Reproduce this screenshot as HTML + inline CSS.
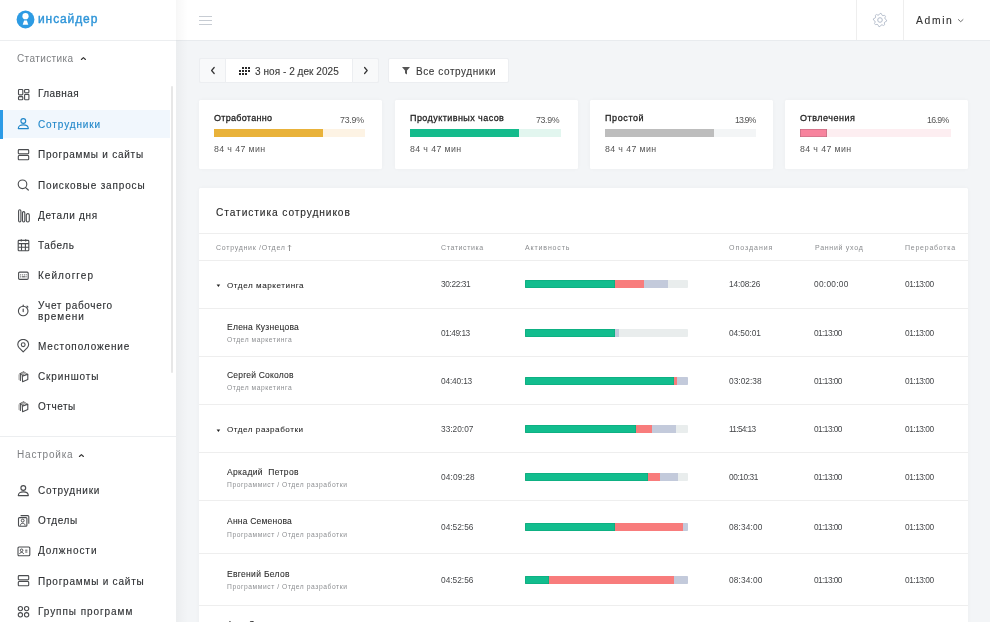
<!DOCTYPE html>
<html><head><meta charset="utf-8"><style>
html,body{margin:0;padding:0;width:990px;height:622px;overflow:hidden;background:#f3f5f7}
body{position:relative;font-family:"Liberation Sans", sans-serif}
.t{position:absolute;white-space:nowrap;will-change:transform}
#ct0,#ct1,#ct2,#ct3{-webkit-text-stroke:0.28px #222}
.med{-webkit-text-stroke:0.12px currentColor}
.med2{-webkit-text-stroke:0.08px currentColor}
.logo{-webkit-text-stroke:0.4px currentColor}
.r{position:absolute;display:block}
</style></head><body>
<div class="r" style="left:0px;top:0px;width:990px;height:622px;background:#f3f5f7"></div>
<div class="r" style="left:176px;top:0px;width:814px;height:40px;background:#fff"></div>
<div class="r" style="left:176px;top:40px;width:814px;height:1px;background:#e8ebee"></div>
<div class="r" style="left:0px;top:0px;width:176px;height:622px;background:#fff"></div>
<div class="r" style="left:0px;top:40px;width:176px;height:1px;background:#eceef0"></div>
<div class="r" style="left:176px;top:0px;width:12px;height:622px;background:linear-gradient(to right, rgba(0,0,0,0.03), rgba(0,0,0,0))"></div>
<div class="r" style="left:170.5px;top:86px;width:2.5px;height:287px;background:#e7e7e7;border-radius:1px"></div>
<svg class="r" style="left:16.2px;top:10.3px;" width="19" height="19" viewBox="0 0 19 19" fill="none"><circle cx="9.5" cy="9.5" r="8.9" fill="#2d9be3"/><circle cx="9.5" cy="6.2" r="3.1" fill="#fff"/><path d="M8.1 10.4 L10.9 10.4 L12.3 14.8 L6.7 14.8 Z" fill="#fff"/></svg>
<div class="t logo" id="logo" style="left:37.80px;top:13.04px;font-size:12px;line-height:12px;color:#2f95d8;font-weight:400;letter-spacing:0.900px">инсайдер</div>
<div class="t" id="sec1" style="left:16.70px;top:53.53px;font-size:10px;line-height:10px;color:#7d7f82;font-weight:400;letter-spacing:0.390px">Статистика</div>
<svg class="r" style="left:80px;top:56px;" width="7" height="5" viewBox="0 0 7 5" fill="none"><path d="M1.4 3.5 L3.4 1.6 L5.4 3.5" stroke="#333" stroke-width="1.15" stroke-linecap="round" stroke-linejoin="round"/></svg>
<div class="r" style="left:0px;top:110px;width:170px;height:28px;background:#f1f7fd"></div>
<div class="r" style="left:0px;top:110px;width:3px;height:28.5px;background:#2d9be6"></div>
<div class="t med" id="n1" style="left:38.30px;top:89.33px;font-size:10px;line-height:10px;color:#2e3033;font-weight:400;letter-spacing:0.435px">Главная</div>
<div class="t med" id="n2" style="left:38.30px;top:119.53px;font-size:10px;line-height:10px;color:#1f86c9;font-weight:400;letter-spacing:0.890px">Сотрудники</div>
<div class="t med" id="n3" style="left:38.30px;top:150.34px;font-size:10px;line-height:10px;color:#2e3033;font-weight:400;letter-spacing:0.754px">Программы и сайты</div>
<div class="t med" id="n4" style="left:38.30px;top:180.94px;font-size:10px;line-height:10px;color:#2e3033;font-weight:400;letter-spacing:0.844px">Поисковые запросы</div>
<div class="t med" id="n5" style="left:38.30px;top:211.03px;font-size:10px;line-height:10px;color:#2e3033;font-weight:400;letter-spacing:0.680px">Детали дня</div>
<div class="t med" id="n6" style="left:38.30px;top:241.13px;font-size:10px;line-height:10px;color:#2e3033;font-weight:400;letter-spacing:0.576px">Табель</div>
<div class="t med" id="n7" style="left:38.30px;top:270.84px;font-size:10px;line-height:10px;color:#2e3033;font-weight:400;letter-spacing:1.035px">Кейлоггер</div>
<div class="t med" id="n8" style="left:38.30px;top:300.84px;font-size:10px;line-height:10px;color:#2e3033;font-weight:400;letter-spacing:0.667px">Учет рабочего</div>
<div class="t med" id="n8b" style="left:38.30px;top:311.64px;font-size:10px;line-height:10px;color:#2e3033;font-weight:400;letter-spacing:0.960px">времени</div>
<div class="t med" id="n9" style="left:38.30px;top:341.74px;font-size:10px;line-height:10px;color:#2e3033;font-weight:400;letter-spacing:0.865px">Местоположение</div>
<div class="t med" id="n10" style="left:38.30px;top:371.94px;font-size:10px;line-height:10px;color:#2e3033;font-weight:400;letter-spacing:0.878px">Скриншоты</div>
<div class="t med" id="n11" style="left:38.30px;top:402.04px;font-size:10px;line-height:10px;color:#2e3033;font-weight:400;letter-spacing:0.522px">Отчеты</div>
<svg class="r" style="left:17px;top:89px;" width="13" height="12" viewBox="0 0 13 12" fill="none"><rect x="1.5" y="0.5" width="4.3" height="5.4" rx="0.8" stroke="#4a4c4f" stroke-width="1.1"/><rect x="1.5" y="7.6" width="4.3" height="3.2" rx="0.8" stroke="#4a4c4f" stroke-width="1.1"/><rect x="7.6" y="0.5" width="4.3" height="3.2" rx="0.8" stroke="#4a4c4f" stroke-width="1.1"/><rect x="7.6" y="5.4" width="4.3" height="5.4" rx="0.8" stroke="#4a4c4f" stroke-width="1.1"/></svg>
<svg class="r" style="left:17px;top:118.3px;" width="13" height="12" viewBox="0 0 13 12" fill="none"><circle cx="6.3" cy="3" r="2.4" stroke="#1f86c9" stroke-width="1.15"/><path d="M1.3 10.6 C1.3 7.6 3.6 6.9 6.3 6.9 C9 6.9 11.3 7.6 11.3 10.6 Z" stroke="#1f86c9" stroke-width="1.15" stroke-linejoin="round"/></svg>
<svg class="r" style="left:17px;top:148.6px;" width="13" height="12" viewBox="0 0 13 12" fill="none"><rect x="1.3" y="0.6" width="10.4" height="4.3" rx="0.9" stroke="#4a4c4f" stroke-width="1.1"/><rect x="1.3" y="6.5" width="10.4" height="4.3" rx="0.9" stroke="#4a4c4f" stroke-width="1.1"/></svg>
<svg class="r" style="left:17px;top:179px;" width="13" height="12" viewBox="0 0 13 12" fill="none"><circle cx="5.5" cy="5.3" r="4.3" stroke="#4a4c4f" stroke-width="1.1"/><path d="M8.6 8.6 L11.3 11" stroke="#4a4c4f" stroke-width="1.2" stroke-linecap="round"/></svg>
<svg class="r" style="left:17px;top:209.2px;" width="14" height="14" viewBox="0 0 14 14" fill="none"><rect x="1.6" y="0.8" width="2.3" height="12.2" rx="1.15" stroke="#4a4c4f" stroke-width="1.1"/><rect x="5.5" y="2.6" width="2.3" height="10.4" rx="1.15" stroke="#4a4c4f" stroke-width="1.1"/><rect x="9.3" y="4.6" width="3" height="8.4" rx="1.5" stroke="#4a4c4f" stroke-width="1.1"/></svg>
<svg class="r" style="left:17px;top:239.2px;" width="13" height="13" viewBox="0 0 13 13" fill="none"><rect x="1.2" y="1.4" width="10.6" height="10.4" rx="0.8" stroke="#4a4c4f" stroke-width="1.1"/><path d="M1.2 4.6 H11.8 M1.2 8.3 H11.8 M4.5 4.6 V11.8 M8.4 4.6 V11.8 M4.3 0.3 V2.6 M8.7 0.3 V2.6" stroke="#4a4c4f" stroke-width="1.1"/></svg>
<svg class="r" style="left:17px;top:271px;" width="13" height="10" viewBox="0 0 13 10" fill="none"><rect x="1.6" y="1.1" width="9.6" height="7.3" rx="1.1" stroke="#4a4c4f" stroke-width="1.1"/><circle cx="3.7" cy="3.8" r="0.6" fill="#4a4c4f"/><circle cx="5.7" cy="3.8" r="0.6" fill="#4a4c4f"/><circle cx="7.7" cy="3.8" r="0.6" fill="#4a4c4f"/><circle cx="9.3" cy="3.8" r="0.5" fill="#4a4c4f"/><circle cx="3.7" cy="5.8" r="0.6" fill="#4a4c4f"/><path d="M5.3 5.8 H8.1" stroke="#4a4c4f" stroke-width="1" stroke-linecap="round"/><circle cx="9.3" cy="5.8" r="0.5" fill="#4a4c4f"/></svg>
<svg class="r" style="left:17px;top:303.3px;" width="13" height="14" viewBox="0 0 13 14" fill="none"><circle cx="6.2" cy="8" r="4.8" stroke="#4a4c4f" stroke-width="1.1"/><path d="M6.2 2 V3.2 M6.2 6 V8.6 M10 3.2 L10.8 4" stroke="#4a4c4f" stroke-width="1.2" stroke-linecap="round"/></svg>
<svg class="r" style="left:17px;top:339.3px;" width="13" height="14" viewBox="0 0 13 14" fill="none"><path d="M6.2 12.9 L2 8.6 C0.2 6.6 0.5 3.4 2.5 1.8 C4.6 0.2 7.8 0.2 9.9 1.8 C11.9 3.4 12.2 6.6 10.4 8.6 Z" stroke="#4a4c4f" stroke-width="1.1" stroke-linejoin="round"/><circle cx="6.2" cy="5.7" r="1.9" stroke="#4a4c4f" stroke-width="1.1"/></svg>
<svg class="r" style="left:17px;top:369.8px;" width="13" height="13" viewBox="0 0 13 13" fill="none"><path d="M1.3 4.4 L3.6 3.5 V10.9 L1.3 9.7 Z" fill="#bdbdbd"/><path d="M3.5 3.7 V10.9" stroke="#4a4c4f" stroke-width="0.9"/><path d="M2.2 3.6 L6.6 1.2 L10.9 3.9 L5.4 5.9 Z" fill="#4a4a4a"/><path d="M3.6 2.9 L8.4 5 M5.1 2.1 L9.7 4.4 M4.4 4.9 L8.3 2.3 M6.4 5.2 L9.6 3.1" stroke="#fff" stroke-width="0.55"/><path d="M5.3 6.3 L10.8 4.3 V9.6 L5.6 11.8 Z" stroke="#4a4c4f" stroke-width="1.1" stroke-linejoin="round"/></svg>
<svg class="r" style="left:17px;top:399.8px;" width="13" height="13" viewBox="0 0 13 13" fill="none"><path d="M1.3 4.4 L3.6 3.5 V10.9 L1.3 9.7 Z" fill="#bdbdbd"/><path d="M3.5 3.7 V10.9" stroke="#4a4c4f" stroke-width="0.9"/><path d="M2.2 3.6 L6.6 1.2 L10.9 3.9 L5.4 5.9 Z" fill="#4a4a4a"/><path d="M3.6 2.9 L8.4 5 M5.1 2.1 L9.7 4.4 M4.4 4.9 L8.3 2.3 M6.4 5.2 L9.6 3.1" stroke="#fff" stroke-width="0.55"/><path d="M5.3 6.3 L10.8 4.3 V9.6 L5.6 11.8 Z" stroke="#4a4c4f" stroke-width="1.1" stroke-linejoin="round"/></svg>
<div class="r" style="left:0px;top:436px;width:176px;height:1px;background:#eceef0"></div>
<div class="t" id="sec2" style="left:16.90px;top:449.54px;font-size:10px;line-height:10px;color:#7d7f82;font-weight:400;letter-spacing:0.799px">Настройка</div>
<svg class="r" style="left:78px;top:452.7px;" width="7" height="5" viewBox="0 0 7 5" fill="none"><path d="M1.4 3.5 L3.4 1.6 L5.4 3.5" stroke="#333" stroke-width="1.15" stroke-linecap="round" stroke-linejoin="round"/></svg>
<div class="t med" id="m1" style="left:38.30px;top:486.34px;font-size:10px;line-height:10px;color:#2e3033;font-weight:400;letter-spacing:0.810px">Сотрудники</div>
<div class="t med" id="m2" style="left:38.30px;top:516.43px;font-size:10px;line-height:10px;color:#2e3033;font-weight:400;letter-spacing:0.612px">Отделы</div>
<div class="t med" id="m3" style="left:38.30px;top:546.33px;font-size:10px;line-height:10px;color:#2e3033;font-weight:400;letter-spacing:0.934px">Должности</div>
<div class="t med" id="m4" style="left:38.30px;top:577.03px;font-size:10px;line-height:10px;color:#2e3033;font-weight:400;letter-spacing:0.788px">Программы и сайты</div>
<div class="t med" id="m5" style="left:38.30px;top:607.24px;font-size:10px;line-height:10px;color:#2e3033;font-weight:400;letter-spacing:0.939px">Группы программ</div>
<svg class="r" style="left:17px;top:485px;" width="13" height="12" viewBox="0 0 13 12" fill="none"><circle cx="6.3" cy="3" r="2.4" stroke="#4a4c4f" stroke-width="1.15"/><path d="M1.3 10.6 C1.3 7.6 3.6 6.9 6.3 6.9 C9 6.9 11.3 7.6 11.3 10.6 Z" stroke="#4a4c4f" stroke-width="1.15" stroke-linejoin="round"/></svg>
<svg class="r" style="left:17px;top:513.5px;" width="13" height="13" viewBox="0 0 13 13" fill="none"><rect x="1.5" y="3.6" width="8.4" height="8.6" rx="1" stroke="#4a4c4f" stroke-width="1.1"/><path d="M3.6 1.6 H10.8 C11.4 1.6 11.8 2 11.8 2.6 V9.8" stroke="#4a4c4f" stroke-width="1.1"/><circle cx="5.7" cy="6.6" r="1.45" stroke="#4a4c4f" stroke-width="1"/><path d="M3.3 11.6 C3.5 9.9 4.4 9.3 5.7 9.3 C7 9.3 7.9 9.9 8.1 11.6" stroke="#4a4c4f" stroke-width="1"/></svg>
<svg class="r" style="left:17px;top:545.5px;" width="14" height="11" viewBox="0 0 14 11" fill="none"><rect x="1" y="1" width="11.8" height="8.8" rx="1" stroke="#4a4c4f" stroke-width="1.1"/><circle cx="4.6" cy="4.3" r="1.3" stroke="#4a4c4f" stroke-width="1"/><path d="M2.6 8 C2.9 6.8 3.6 6.4 4.6 6.4 C5.6 6.4 6.3 6.8 6.6 8" stroke="#4a4c4f" stroke-width="1"/><path d="M8.2 4.2 H10.4 M8.2 6 H10.4" stroke="#4a4c4f" stroke-width="1"/></svg>
<svg class="r" style="left:17px;top:574.6px;" width="13" height="12" viewBox="0 0 13 12" fill="none"><rect x="1.3" y="0.6" width="10.4" height="4.3" rx="0.9" stroke="#4a4c4f" stroke-width="1.1"/><rect x="1.3" y="6.5" width="10.4" height="4.3" rx="0.9" stroke="#4a4c4f" stroke-width="1.1"/></svg>
<svg class="r" style="left:17px;top:604.6px;" width="13" height="13" viewBox="0 0 13 13" fill="none"><circle cx="3.4" cy="3.6" r="2.15" stroke="#4a4c4f" stroke-width="1.1"/><circle cx="9.6" cy="3.6" r="2.15" stroke="#4a4c4f" stroke-width="1.1"/><circle cx="3.4" cy="9.8" r="2.15" stroke="#4a4c4f" stroke-width="1.1"/><circle cx="9.6" cy="9.8" r="2.15" stroke="#4a4c4f" stroke-width="1.1"/></svg>
<svg class="r" style="left:198px;top:15px;" width="15" height="11" viewBox="0 0 15 11" fill="none"><path d="M1 1.5 H14 M1 5.5 H14 M1 9.5 H14" stroke="#c7ccd3" stroke-width="1.1"/></svg>
<div class="r" style="left:856px;top:0px;width:1px;height:40px;background:#eeeeee"></div>
<div class="r" style="left:903px;top:0px;width:1px;height:40px;background:#eeeeee"></div>
<svg class="r" style="left:871.7px;top:12.1px;" width="16" height="16" viewBox="0 0 16 16" fill="none"><path d="M8.00 1.40 L9.29 1.53 L9.99 3.20 L10.89 3.68 L12.67 3.33 L13.49 4.33 L12.80 6.01 L13.10 6.99 L14.60 8.00 L14.47 9.29 L12.80 9.99 L12.32 10.89 L12.67 12.67 L11.67 13.49 L9.99 12.80 L9.01 13.10 L8.00 14.60 L6.71 14.47 L6.01 12.80 L5.11 12.32 L3.33 12.67 L2.51 11.67 L3.20 9.99 L2.90 9.01 L1.40 8.00 L1.53 6.71 L3.20 6.01 L3.68 5.11 L3.33 3.33 L4.33 2.51 L6.01 3.20 L6.99 2.90 Z" stroke="#b3bccb" stroke-width="0.9" stroke-linejoin="round"/><circle cx="8" cy="8" r="2.3" stroke="#b3bccb" stroke-width="1"/></svg>
<div class="t med" id="admin" style="left:916.20px;top:15.58px;font-size:10.3px;line-height:10.3px;color:#333;font-weight:400;letter-spacing:1.665px">Admin</div>
<svg class="r" style="left:957px;top:18px;" width="8" height="5" viewBox="0 0 8 5" fill="none"><path d="M1.4 1.6 L3.7 3.7 L6 1.6" stroke="#555" stroke-width="0.85" stroke-linecap="round"/></svg>
<div class="r" style="left:199px;top:58px;width:180px;height:25px;background:#fff;border:1px solid #eceef1;box-sizing:border-box;border-radius:2px"></div>
<div class="r" style="left:199px;top:58px;width:27px;height:25px;background:#f8f9fa;border:1px solid #eceef1;box-sizing:border-box;border-radius:2px 0 0 2px"></div>
<div class="r" style="left:352px;top:58px;width:27px;height:25px;background:#f8f9fa;border:1px solid #eceef1;box-sizing:border-box;border-radius:0 2px 2px 0"></div>
<svg class="r" style="left:209px;top:66px;" width="8" height="9" viewBox="0 0 8 9" fill="none"><path d="M5.2 1.5 L2.6 4.5 L5.2 7.5" stroke="#333" stroke-width="1.2" stroke-linecap="round" stroke-linejoin="round"/></svg>
<svg class="r" style="left:362px;top:66px;" width="8" height="9" viewBox="0 0 8 9" fill="none"><path d="M2.6 1.5 L5.2 4.5 L2.6 7.5" stroke="#333" stroke-width="1.2" stroke-linecap="round" stroke-linejoin="round"/></svg>
<svg class="r" style="left:239px;top:67px;" width="12" height="9" viewBox="0 0 12 9" fill="none"><rect x="3" y="0" width="2" height="2" fill="#2a2a2a"/><rect x="6" y="0" width="2" height="2" fill="#2a2a2a"/><rect x="9" y="0" width="2" height="2" fill="#2a2a2a"/><rect x="0" y="3" width="2" height="2" fill="#2a2a2a"/><rect x="3" y="3" width="2" height="2" fill="#2a2a2a"/><rect x="6" y="3" width="2" height="2" fill="#2a2a2a"/><rect x="9" y="3" width="2" height="2" fill="#2a2a2a"/><rect x="0" y="6" width="2" height="2" fill="#2a2a2a"/><rect x="3" y="6" width="2" height="2" fill="#2a2a2a"/><rect x="6" y="6" width="2" height="2" fill="#2a2a2a"/></svg>
<div class="t med" id="date" style="left:255.00px;top:66.83px;font-size:10px;line-height:10px;color:#3a3a3a;font-weight:400;letter-spacing:0.053px">3 ноя - 2 дек 2025</div>
<div class="r" style="left:388px;top:58px;width:121px;height:25px;background:#fff;border:1px solid #eceef1;box-sizing:border-box;border-radius:2px"></div>
<svg class="r" style="left:401px;top:66px;" width="10" height="10" viewBox="0 0 10 10" fill="none"><path d="M1 1 H9 L6 4.6 V8.6 L4 7.2 V4.6 Z" fill="#555"/></svg>
<div class="t med" id="filter" style="left:416.00px;top:67.13px;font-size:10px;line-height:10px;color:#3a3a3a;font-weight:400;letter-spacing:0.575px">Все сотрудники</div>
<div class="r" style="left:199px;top:100px;width:183px;height:69px;background:#fff;border-radius:1.5px;box-shadow:0 0 4px rgba(0,0,0,0.035)"></div>
<div class="t" id="ct0" style="left:213.70px;top:114.38px;font-size:9px;line-height:9px;color:#222;font-weight:400;letter-spacing:0.288px">Отработанно</div>
<div class="t" id="cp0" style="right:625.70px;top:116.35px;font-size:8.8px;line-height:8.8px;color:#555;font-weight:400;letter-spacing:-0.225px">73.9%</div>
<div class="r" style="left:214px;top:129px;width:151px;height:8px;background:#fdf3e4"></div>
<div class="r" style="left:214px;top:129px;width:109px;height:8px;background:#e9b23a"></div>
<div class="t" id="cm0" style="left:213.70px;top:144.65px;font-size:8.8px;line-height:8.8px;color:#555;font-weight:400;letter-spacing:0.378px">84 ч 47 мин</div>
<div class="r" style="left:395px;top:100px;width:183px;height:69px;background:#fff;border-radius:1.5px;box-shadow:0 0 4px rgba(0,0,0,0.035)"></div>
<div class="t" id="ct1" style="left:409.70px;top:114.38px;font-size:9px;line-height:9px;color:#222;font-weight:400;letter-spacing:0.434px">Продуктивных часов</div>
<div class="t" id="cp1" style="right:431.00px;top:116.35px;font-size:8.8px;line-height:8.8px;color:#555;font-weight:400;letter-spacing:-0.360px">73.9%</div>
<div class="r" style="left:410px;top:129px;width:151px;height:8px;background:#e2f6ef"></div>
<div class="r" style="left:410px;top:129px;width:109px;height:8px;background:#14bb8c"></div>
<div class="t" id="cm1" style="left:409.70px;top:144.65px;font-size:8.8px;line-height:8.8px;color:#555;font-weight:400;letter-spacing:0.378px">84 ч 47 мин</div>
<div class="r" style="left:590px;top:100px;width:183px;height:69px;background:#fff;border-radius:1.5px;box-shadow:0 0 4px rgba(0,0,0,0.035)"></div>
<div class="t" id="ct2" style="left:604.70px;top:114.38px;font-size:9px;line-height:9px;color:#222;font-weight:400;letter-spacing:0.600px">Простой</div>
<div class="t" id="cp2" style="right:234.50px;top:116.35px;font-size:8.8px;line-height:8.8px;color:#555;font-weight:400;letter-spacing:-0.900px">13.9%</div>
<div class="r" style="left:605px;top:129px;width:151px;height:8px;background:#f3f5f6"></div>
<div class="r" style="left:605px;top:129px;width:108.7px;height:8px;background:#bdbdbd"></div>
<div class="t" id="cm2" style="left:604.70px;top:144.65px;font-size:8.8px;line-height:8.8px;color:#555;font-weight:400;letter-spacing:0.378px">84 ч 47 мин</div>
<div class="r" style="left:785px;top:100px;width:183px;height:69px;background:#fff;border-radius:1.5px;box-shadow:0 0 4px rgba(0,0,0,0.035)"></div>
<div class="t" id="ct3" style="left:799.70px;top:114.38px;font-size:9px;line-height:9px;color:#222;font-weight:400;letter-spacing:0.520px">Отвлечения</div>
<div class="t" id="cp3" style="right:41.00px;top:116.35px;font-size:8.8px;line-height:8.8px;color:#555;font-weight:400;letter-spacing:-0.675px">16.9%</div>
<div class="r" style="left:800px;top:129px;width:151px;height:8px;background:#fdeef1"></div>
<div class="r" style="left:800px;top:129px;width:27px;height:8px;background:#f7839d;box-shadow:inset 0 0 0 0.6px #b86a7e"></div>
<div class="t" id="cm3" style="left:799.70px;top:144.65px;font-size:8.8px;line-height:8.8px;color:#555;font-weight:400;letter-spacing:0.378px">84 ч 47 мин</div>
<div class="r" style="left:199px;top:188px;width:769px;height:440px;background:#fff;border-radius:1.5px;box-shadow:0 0 4px rgba(0,0,0,0.035)"></div>
<div class="t med" id="ttl" style="left:215.70px;top:207.67px;font-size:10.2px;line-height:10.2px;color:#2a2a2a;font-weight:400;letter-spacing:0.904px">Статистика сотрудников</div>
<div class="r" style="left:199px;top:233px;width:769px;height:1px;background:#eeeeee"></div>
<div class="r" style="left:199px;top:260px;width:769px;height:1px;background:#eeeeee"></div>
<div class="t" id="h1" style="left:215.70px;top:244.07px;font-size:7px;line-height:7px;color:#8a8c8f;font-weight:400;letter-spacing:0.714px">Сотрудник /Отдел</div>
<svg class="r" style="left:287.2px;top:244px;" width="5" height="8" viewBox="0 0 5 8" fill="none"><path d="M2.5 7 V1.2 M1.1 2.6 L2.5 1.2 L3.9 2.6" stroke="#777" stroke-width="0.8"/></svg>
<div class="t" id="h2" style="left:440.90px;top:244.07px;font-size:7px;line-height:7px;color:#8a8c8f;font-weight:400;letter-spacing:0.610px">Статистика</div>
<div class="t" id="h3" style="left:524.80px;top:244.07px;font-size:7px;line-height:7px;color:#8a8c8f;font-weight:400;letter-spacing:0.850px">Активность</div>
<div class="t" id="h4" style="left:729.00px;top:244.07px;font-size:7px;line-height:7px;color:#8a8c8f;font-weight:400;letter-spacing:0.967px">Опоздания</div>
<div class="t" id="h5" style="left:814.60px;top:244.07px;font-size:7px;line-height:7px;color:#8a8c8f;font-weight:400;letter-spacing:0.720px">Ранний уход</div>
<div class="t" id="h6" style="left:904.90px;top:244.07px;font-size:7px;line-height:7px;color:#8a8c8f;font-weight:400;letter-spacing:0.756px">Переработка</div>
<svg class="r" style="left:215.5px;top:284.1px" width="5" height="4" viewBox="0 0 5 4"><path d="M0.6 0.6 H4.2 L2.4 2.9 Z" fill="#222"/></svg>
<div class="t med2" id="rn0" style="left:226.50px;top:281.64px;font-size:8.1px;line-height:8.1px;color:#1f1f1f;font-weight:400;letter-spacing:0.564px">Отдел маркетинга</div>
<div class="t" id="rv0" style="left:440.90px;top:279.97px;font-size:8.3px;line-height:8.3px;color:#46484b;font-weight:400;letter-spacing:-0.373px">30:22:31</div>
<div class="t" id="rl0" style="left:729.00px;top:279.97px;font-size:8.3px;line-height:8.3px;color:#46484b;font-weight:400;letter-spacing:-0.129px">14:08:26</div>
<div class="t" id="re0" style="left:814.40px;top:279.97px;font-size:8.3px;line-height:8.3px;color:#46484b;font-weight:400;letter-spacing:0.283px">00:00:00</div>
<div class="t" id="ro0" style="left:904.80px;top:279.97px;font-size:8.3px;line-height:8.3px;color:#46484b;font-weight:400;letter-spacing:-0.463px">01:13:00</div>
<div class="r" style="left:525px;top:280px;width:163px;height:8px;background:#e9eded;border-radius:1px;overflow:hidden"><div class="r" style="left:0;top:0;width:143px;height:8px;background:#c3cadb"></div><div class="r" style="left:0;top:0;width:119px;height:8px;background:#f87c7c"></div><div class="r" style="left:0;top:0;width:90.2px;height:8px;background:#12bd8e;box-shadow:inset 0 0 0 0.5px rgba(0,120,80,0.35)"></div></div>
<div class="r" style="left:199px;top:308px;width:769px;height:1px;background:#eeeeee"></div>
<div class="t med2" id="rn1" style="left:226.50px;top:322.80px;font-size:8.5px;line-height:8.5px;color:#2a2a2a;font-weight:400;letter-spacing:0.251px">Елена Кузнецова</div>
<div class="t" id="rs1" style="left:226.50px;top:337.33px;font-size:6.7px;line-height:6.7px;color:#8d8f92;font-weight:400;letter-spacing:0.558px">Отдел маркетинга</div>
<div class="t" id="rv1" style="left:440.90px;top:328.97px;font-size:8.3px;line-height:8.3px;color:#46484b;font-weight:400;letter-spacing:-0.437px">01:49:13</div>
<div class="t" id="rl1" style="left:729.00px;top:328.97px;font-size:8.3px;line-height:8.3px;color:#46484b;font-weight:400;letter-spacing:-0.064px">04:50:01</div>
<div class="t" id="re1" style="left:814.40px;top:328.97px;font-size:8.3px;line-height:8.3px;color:#46484b;font-weight:400;letter-spacing:-0.566px">01:13:00</div>
<div class="t" id="ro1" style="left:904.80px;top:328.97px;font-size:8.3px;line-height:8.3px;color:#46484b;font-weight:400;letter-spacing:-0.463px">01:13:00</div>
<div class="r" style="left:525px;top:329px;width:163px;height:8px;background:#e9eded;border-radius:1px;overflow:hidden"><div class="r" style="left:0;top:0;width:94px;height:8px;background:#c3cadb"></div><div class="r" style="left:0;top:0;width:90px;height:8px;background:#f87c7c"></div><div class="r" style="left:0;top:0;width:90px;height:8px;background:#12bd8e;box-shadow:inset 0 0 0 0.5px rgba(0,120,80,0.35)"></div></div>
<div class="r" style="left:199px;top:356px;width:769px;height:1px;background:#eeeeee"></div>
<div class="t med2" id="rn2" style="left:226.50px;top:370.70px;font-size:8.5px;line-height:8.5px;color:#2a2a2a;font-weight:400;letter-spacing:0.201px">Сергей Соколов</div>
<div class="t" id="rs2" style="left:226.50px;top:385.23px;font-size:6.7px;line-height:6.7px;color:#8d8f92;font-weight:400;letter-spacing:0.558px">Отдел маркетинга</div>
<div class="t" id="rv2" style="left:440.90px;top:376.97px;font-size:8.3px;line-height:8.3px;color:#46484b;font-weight:400;letter-spacing:-0.154px">04:40:13</div>
<div class="t" id="rl2" style="left:729.00px;top:376.97px;font-size:8.3px;line-height:8.3px;color:#46484b;font-weight:400;letter-spacing:0.051px">03:02:38</div>
<div class="t" id="re2" style="left:814.40px;top:376.97px;font-size:8.3px;line-height:8.3px;color:#46484b;font-weight:400;letter-spacing:-0.566px">01:13:00</div>
<div class="t" id="ro2" style="left:904.80px;top:376.97px;font-size:8.3px;line-height:8.3px;color:#46484b;font-weight:400;letter-spacing:-0.463px">01:13:00</div>
<div class="r" style="left:525px;top:377px;width:163px;height:8px;background:#e9eded;border-radius:1px;overflow:hidden"><div class="r" style="left:0;top:0;width:163px;height:8px;background:#c3cadb"></div><div class="r" style="left:0;top:0;width:151.5px;height:8px;background:#f87c7c"></div><div class="r" style="left:0;top:0;width:149.3px;height:8px;background:#12bd8e;box-shadow:inset 0 0 0 0.5px rgba(0,120,80,0.35)"></div></div>
<div class="r" style="left:199px;top:404px;width:769px;height:1px;background:#eeeeee"></div>
<svg class="r" style="left:215.5px;top:428.7px" width="5" height="4" viewBox="0 0 5 4"><path d="M0.6 0.6 H4.2 L2.4 2.9 Z" fill="#222"/></svg>
<div class="t med2" id="rn3" style="left:226.50px;top:426.24px;font-size:8.1px;line-height:8.1px;color:#1f1f1f;font-weight:400;letter-spacing:0.534px">Отдел разработки</div>
<div class="t" id="rv3" style="left:440.90px;top:424.97px;font-size:8.3px;line-height:8.3px;color:#46484b;font-weight:400;letter-spacing:0.013px">33:20:07</div>
<div class="t" id="rl3" style="left:729.00px;top:424.97px;font-size:8.3px;line-height:8.3px;color:#46484b;font-weight:400;letter-spacing:-0.669px">11:54:13</div>
<div class="t" id="re3" style="left:814.40px;top:424.97px;font-size:8.3px;line-height:8.3px;color:#46484b;font-weight:400;letter-spacing:-0.566px">01:13:00</div>
<div class="t" id="ro3" style="left:904.80px;top:424.97px;font-size:8.3px;line-height:8.3px;color:#46484b;font-weight:400;letter-spacing:-0.463px">01:13:00</div>
<div class="r" style="left:525px;top:425px;width:163px;height:8px;background:#e9eded;border-radius:1px;overflow:hidden"><div class="r" style="left:0;top:0;width:151.2px;height:8px;background:#c3cadb"></div><div class="r" style="left:0;top:0;width:126.7px;height:8px;background:#f87c7c"></div><div class="r" style="left:0;top:0;width:111.2px;height:8px;background:#12bd8e;box-shadow:inset 0 0 0 0.5px rgba(0,120,80,0.35)"></div></div>
<div class="r" style="left:199px;top:452px;width:769px;height:1px;background:#eeeeee"></div>
<div class="t med2" id="rn4" style="left:226.50px;top:467.90px;font-size:8.5px;line-height:8.5px;color:#2a2a2a;font-weight:400;letter-spacing:0.347px">Аркадий&nbsp; Петров</div>
<div class="t" id="rs4" style="left:226.50px;top:481.73px;font-size:6.7px;line-height:6.7px;color:#8d8f92;font-weight:400;letter-spacing:0.577px">Программист / Отдел разработки</div>
<div class="t" id="rv4" style="left:440.90px;top:472.97px;font-size:8.3px;line-height:8.3px;color:#46484b;font-weight:400;letter-spacing:0.180px">04:09:28</div>
<div class="t" id="rl4" style="left:729.00px;top:472.97px;font-size:8.3px;line-height:8.3px;color:#46484b;font-weight:400;letter-spacing:-0.424px">00:10:31</div>
<div class="t" id="re4" style="left:814.40px;top:472.97px;font-size:8.3px;line-height:8.3px;color:#46484b;font-weight:400;letter-spacing:-0.566px">01:13:00</div>
<div class="t" id="ro4" style="left:904.80px;top:472.97px;font-size:8.3px;line-height:8.3px;color:#46484b;font-weight:400;letter-spacing:-0.463px">01:13:00</div>
<div class="r" style="left:525px;top:473px;width:163px;height:8px;background:#e9eded;border-radius:1px;overflow:hidden"><div class="r" style="left:0;top:0;width:153.3px;height:8px;background:#c3cadb"></div><div class="r" style="left:0;top:0;width:134.8px;height:8px;background:#f87c7c"></div><div class="r" style="left:0;top:0;width:123.3px;height:8px;background:#12bd8e;box-shadow:inset 0 0 0 0.5px rgba(0,120,80,0.35)"></div></div>
<div class="r" style="left:199px;top:500px;width:769px;height:1px;background:#eeeeee"></div>
<div class="t med2" id="rn5" style="left:226.50px;top:516.80px;font-size:8.5px;line-height:8.5px;color:#2a2a2a;font-weight:400;letter-spacing:0.217px">Анна Семенова</div>
<div class="t" id="rs5" style="left:226.50px;top:531.53px;font-size:6.7px;line-height:6.7px;color:#8d8f92;font-weight:400;letter-spacing:0.577px">Программист / Отдел разработки</div>
<div class="t" id="rv5" style="left:440.90px;top:522.97px;font-size:8.3px;line-height:8.3px;color:#46484b;font-weight:400;letter-spacing:0.013px">04:52:56</div>
<div class="t" id="rl5" style="left:729.00px;top:522.97px;font-size:8.3px;line-height:8.3px;color:#46484b;font-weight:400;letter-spacing:0.167px">08:34:00</div>
<div class="t" id="re5" style="left:814.40px;top:522.97px;font-size:8.3px;line-height:8.3px;color:#46484b;font-weight:400;letter-spacing:-0.566px">01:13:00</div>
<div class="t" id="ro5" style="left:904.80px;top:522.97px;font-size:8.3px;line-height:8.3px;color:#46484b;font-weight:400;letter-spacing:-0.463px">01:13:00</div>
<div class="r" style="left:525px;top:523px;width:163px;height:8px;background:#e9eded;border-radius:1px;overflow:hidden"><div class="r" style="left:0;top:0;width:163px;height:8px;background:#c3cadb"></div><div class="r" style="left:0;top:0;width:157.8px;height:8px;background:#f87c7c"></div><div class="r" style="left:0;top:0;width:90.2px;height:8px;background:#12bd8e;box-shadow:inset 0 0 0 0.5px rgba(0,120,80,0.35)"></div></div>
<div class="r" style="left:199px;top:553px;width:769px;height:1px;background:#eeeeee"></div>
<div class="t med2" id="rn6" style="left:226.50px;top:570.10px;font-size:8.5px;line-height:8.5px;color:#2a2a2a;font-weight:400;letter-spacing:0.315px">Евгений Белов</div>
<div class="t" id="rs6" style="left:226.50px;top:584.13px;font-size:6.7px;line-height:6.7px;color:#8d8f92;font-weight:400;letter-spacing:0.577px">Программист / Отдел разработки</div>
<div class="t" id="rv6" style="left:440.90px;top:575.97px;font-size:8.3px;line-height:8.3px;color:#46484b;font-weight:400;letter-spacing:0.013px">04:52:56</div>
<div class="t" id="rl6" style="left:729.00px;top:575.97px;font-size:8.3px;line-height:8.3px;color:#46484b;font-weight:400;letter-spacing:0.167px">08:34:00</div>
<div class="t" id="re6" style="left:814.40px;top:575.97px;font-size:8.3px;line-height:8.3px;color:#46484b;font-weight:400;letter-spacing:-0.566px">01:13:00</div>
<div class="t" id="ro6" style="left:904.80px;top:575.97px;font-size:8.3px;line-height:8.3px;color:#46484b;font-weight:400;letter-spacing:-0.463px">01:13:00</div>
<div class="r" style="left:525px;top:576px;width:163px;height:8px;background:#e9eded;border-radius:1px;overflow:hidden"><div class="r" style="left:0;top:0;width:163px;height:8px;background:#c3cadb"></div><div class="r" style="left:0;top:0;width:149.2px;height:8px;background:#f87c7c"></div><div class="r" style="left:0;top:0;width:24.2px;height:8px;background:#12bd8e;box-shadow:inset 0 0 0 0.5px rgba(0,120,80,0.35)"></div></div>
<div class="r" style="left:199px;top:605px;width:769px;height:1px;background:#eeeeee"></div>
<div class="t med2" id="rn7" style="left:226.50px;top:619.80px;font-size:8.5px;line-height:8.5px;color:#2a2a2a;font-weight:400;letter-spacing:0.000px">Анна Захарова</div>
</body></html>
